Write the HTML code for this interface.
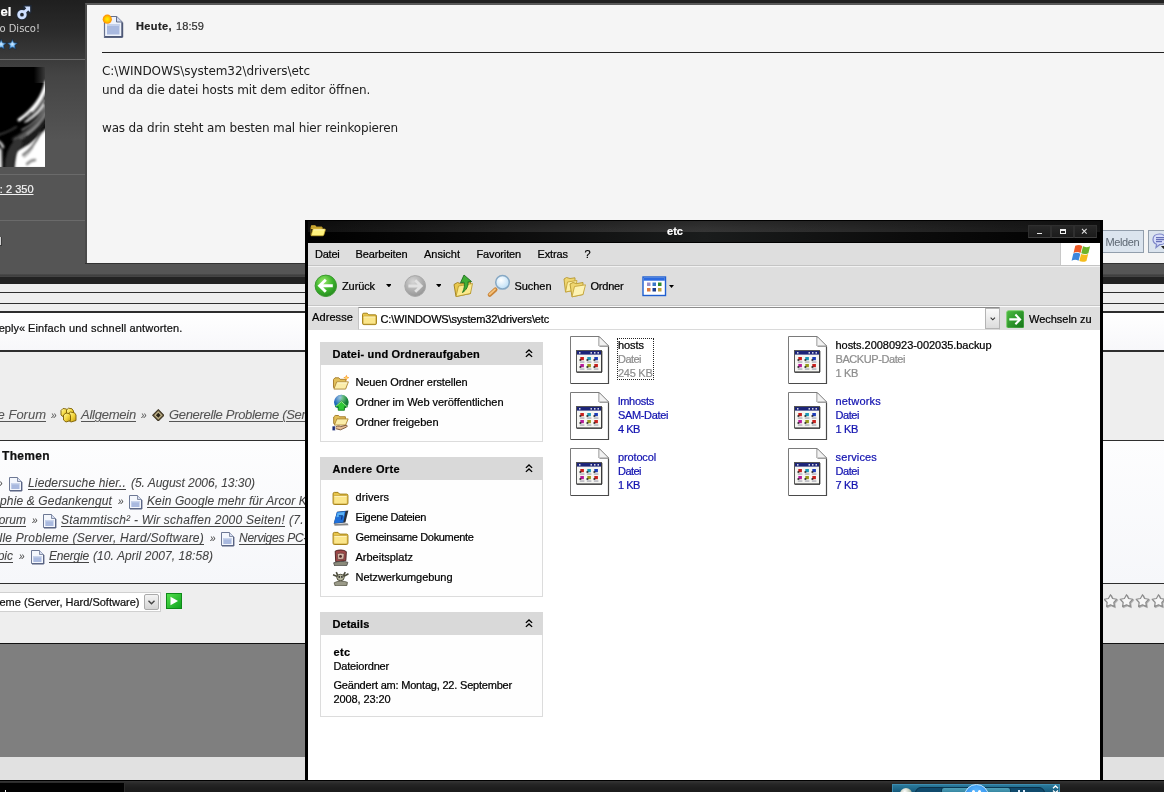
<!DOCTYPE html>
<html lang="de">
<head>
<meta charset="utf-8">
<title>etc</title>
<style>
*{box-sizing:border-box;margin:0;padding:0}
html,body{width:1164px;height:792px;overflow:hidden;background:#7f7f7f;font-family:"Liberation Sans",sans-serif}
#stage{position:relative;width:1164px;height:792px;overflow:hidden;background:#7f7f7f;will-change:transform;transform:translateZ(0)}
#stage div,#stage span,#stage svg{position:absolute;display:block}
.t{white-space:nowrap;-webkit-text-stroke:.22px currentColor}
.hr{background:#2e2e2e}
</style>
</head>
<body>
<div id="stage">

<!-- forum page -->
<div style="left:0;top:0;width:1164px;height:264px;background:#222"></div>
<div id="leftcol" style="left:0;top:0;width:86px;height:264px;background:linear-gradient(#1f1f1f 0,#2a2a2a 30px,#444 75px,#555 140px,#555 264px)"></div>
<div style="left:85px;top:3px;width:1090px;height:261px;background:#f5f5f5;border:2px solid #5a5a5a;border-left-color:#4a4a4a;border-bottom:1px solid #333"></div>
<div style="left:0;top:263px;width:1164px;height:14px;background:linear-gradient(#555 0,#555 11px,#3a3a3a 12px,#444 13px)"></div>
<div style="left:85px;top:263px;width:1080px;height:1px;background:#333"></div>
<div style="left:0;top:277px;width:1164px;height:7px;background:#222"></div>
<div style="left:0;top:284px;width:1164px;height:29px;background:#eee"></div>
<div class="hr" style="left:0;top:292px;width:1164px;height:1px"></div>
<div class="hr" style="left:0;top:303px;width:1164px;height:1px"></div>
<div class="hr" style="left:0;top:311px;width:1164px;height:2px"></div>
<div style="left:0;top:313px;width:1164px;height:38px;background:linear-gradient(#fff,#f7f7fa)"></div>
<div class="hr" style="left:0;top:350px;width:1164px;height:2px"></div>
<div style="left:0;top:352px;width:1164px;height:88px;background:#eee"></div>
<div class="hr" style="left:0;top:440px;width:1164px;height:1px"></div>
<div style="left:0;top:441px;width:1164px;height:143px;background:linear-gradient(#fdfdfe,#f6f7fa)"></div>
<div class="hr" style="left:0;top:583px;width:1164px;height:1px"></div>
<div style="left:0;top:584px;width:1164px;height:59px;background:#eee"></div>
<div class="hr" style="left:0;top:643px;width:1164px;height:1px;background:#111"></div>
<div style="left:0;top:644px;width:1164px;height:113px;background:#7f7f7f"></div>
<div style="left:0;top:757px;width:1164px;height:23px;background:#e1e1e1"></div>
<span class="t" style='left:0.5562500000000004px;top:2.00px;font:normal bold 13px "Liberation Sans",sans-serif;line-height:20px;color:#fff;'>el</span>
<svg style="left:16.200px;top:5.200px" width="15.600" height="15.600" viewBox="0 0 17 17"><g fill="none" stroke="#1d2f4a" stroke-width="5" stroke-linecap="round" opacity=".55"><circle cx="6.5" cy="10.5" r="3.6"/><path d="M9.5 7.5 14 3M10 2.5h4.5V7"/></g><g fill="none" stroke="#cfe0ff" stroke-width="3.100"><circle cx="6.5" cy="10.5" r="3.6"/><path d="M9.3 7.7 14 3"/></g><path d="M9.2 1.6h6.2v6.2z" fill="#cfe0ff"/></svg>
<span class="t" style='left:-0.625px;top:18.50px;font:normal normal 10px "DejaVu Sans","Liberation Sans",sans-serif;line-height:20px;color:#cdcdcd;-webkit-text-stroke:0'>o Disco!</span>
<svg style="left:-6px;top:36px" width="30" height="18" viewBox="-6 36 30 18"><defs><radialGradient id="stg" cx=".5" cy=".5" r=".5"><stop offset="0" stop-color="#d4ecff"/><stop offset=".55" stop-color="#6db8fa"/><stop offset="1" stop-color="#2f8ae6"/></radialGradient></defs><g stroke="#16283e" stroke-opacity=".55" stroke-width="1.400" stroke-linejoin="round" fill="url(#stg)"><path d="M1.20 39.20L2.79 42.52L6.43 43.00L3.77 45.53L4.43 49.15L1.20 47.40L-2.03 49.15L-1.37 45.53L-4.03 43.00L-0.39 42.52z"/><path d="M12.40 39.20L13.99 42.52L17.63 43.00L14.97 45.53L15.63 49.15L12.40 47.40L9.17 49.15L9.83 45.53L7.17 43.00L10.81 42.52z"/></g></svg>
<div style="left:0;top:59px;width:85px;height:1px;background:#6a6a6a"></div>
<svg style="left:0;top:67px" width="45" height="100" viewBox="0 0 45 100">
<defs><linearGradient id="avg" x1="1" y1="0" x2="0" y2="0"><stop offset="0" stop-color="#3a3a3a"/><stop offset=".25" stop-color="#000"/></linearGradient>
<filter id="avb" x="-20%" y="-20%" width="140%" height="140%"><feGaussianBlur stdDeviation=".8"/></filter>
<filter id="avc" x="-20%" y="-20%" width="140%" height="140%"><feGaussianBlur stdDeviation="1.600"/></filter>
<clipPath id="avp"><rect width="45" height="100"/></clipPath></defs>
<rect width="45" height="100" fill="#000"/><rect width="45" height="16" fill="url(#avg)"/>
<g clip-path="url(#avp)">
<g filter="url(#avc)"><path d="M48 60 30 76 16 84 14 102H48z" fill="#fff"/><path d="M-3 80 1.500 82 2 102H-3z" fill="#fff"/>
<path d="M48 34C40 52 28 64 12 72L18 78C32 70 42 58 48 48z" fill="#5a5a5a"/></g>
<g filter="url(#avb)" fill="none" stroke-linecap="round">
<path d="M47 50C40 62 30 72 17 80" stroke="#1c1c1c" stroke-width="6"/>
<path d="M18 76C12 82 9 90 9 102" stroke="#303030" stroke-width="9"/>
<path d="M46 15C43 30 33 43 19 53" stroke="#fff" stroke-width="3"/>
<path d="M46.500 18C43.500 28 39 36 32 43" stroke="#fff" stroke-width="3.600"/>
<path d="M44 38C40 45 34 50 27 54" stroke="#e8e8e8" stroke-width="2.200"/>
<path d="M45 33C41 42 34 49 25 55" stroke="#c8c8c8" stroke-width="1.700"/>
<path d="M46 40C41 50 33 57 22 63" stroke="#8a8a8a" stroke-width="1.500"/>
<path d="M46 28C42 37 36 44 28 50" stroke="#2a2a2a" stroke-width="1.600"/>
<path d="M46 46C42 54 36 61 27 67" stroke="#b0b0b0" stroke-width="1.200"/>
<path d="M16 60C10 64 5 66 -2 68" stroke="#3c3c3c" stroke-width="2"/>
<path d="M-2 74c2 1 4 3 5 6" stroke="#cfcfcf" stroke-width="2.500"/>
<path d="M27 97c3-3 5-4 8-4" stroke="#8a8a8a" stroke-width="2.500"/>
<path d="M40 66C36 76 30 83 23 88" stroke="#555" stroke-width="1.800"/>
<path d="M33 80C30 85 27 88 24 90" stroke="#999" stroke-width="1.400"/>
</g></g></svg>
<div style="left:0;top:174px;width:85px;height:1px;background:#6a6a6a"></div>
<span class="t" style='left:-0.140625px;top:179.00px;font:normal normal 11px "Liberation Sans",sans-serif;line-height:20px;color:#f2f2f2;text-decoration:underline;'>: 2 350</span>
<div style="left:0;top:220px;width:85px;height:1px;background:#6a6a6a"></div>
<div style="left:-3px;top:237px;width:5px;height:9px;background:#d2d2d2;border-right:1px solid #3a3a3a;border-bottom:1px solid #3a3a3a"></div>
<svg style="left:101px;top:13px" width="24" height="27" viewBox="0 0 24 27">
<defs><radialGradient id="sun"><stop offset="0" stop-color="#fff200"/><stop offset=".45" stop-color="#ffd000"/><stop offset="1" stop-color="#ff8a00"/></radialGradient></defs>
<path d="M3.5 3.5h12l5.5 5.5v15.5h-17.5z" fill="#eef2fb" stroke="#66708c" stroke-width="1.2"/>
<path d="M4 23.8h17.2M21.4 9.5v14.8" stroke="#4e5876" stroke-width="1.6" fill="none"/>
<path d="M15.5 3.5v5.5h5.5" fill="#cfd8ee" stroke="#66708c" stroke-width="1"/>
<rect x="6" y="11" width="12.5" height="10.5" fill="#a9b9df"/><rect x="6" y="11" width="12.5" height="2" fill="#c4d0ea"/>
<circle cx="6.3" cy="6.2" r="4.6" fill="url(#sun)"/></svg>
<span class="t" style='left:136px;top:16.00px;font:normal bold 11px "Liberation Sans",sans-serif;line-height:20px;color:#222;letter-spacing:0.396px;'>Heute,</span>
<span class="t" style='left:176px;top:16.00px;font:normal normal 11px "Liberation Sans",sans-serif;line-height:20px;color:#333;letter-spacing:0.094px;'>18:59</span>
<div style="left:102px;top:52px;width:1062px;height:1px;background:#222"></div>
<span class="t" style='left:102px;top:61.00px;font:normal normal 12px "DejaVu Sans","Liberation Sans",sans-serif;line-height:20px;color:#202020;letter-spacing:-0.066px;-webkit-text-stroke:0'>C:\WINDOWS\system32\drivers\etc</span>
<span class="t" style='left:102px;top:80.00px;font:normal normal 12px "DejaVu Sans","Liberation Sans",sans-serif;line-height:20px;color:#202020;letter-spacing:-0.110px;-webkit-text-stroke:0'>und da die datei hosts mit dem editor öffnen.</span>
<span class="t" style='left:102px;top:118.00px;font:normal normal 12px "DejaVu Sans","Liberation Sans",sans-serif;line-height:20px;color:#202020;letter-spacing:-0.153px;-webkit-text-stroke:0'>was da drin steht am besten mal hier reinkopieren</span>
<span class="t" style='left:-1.296875px;top:318.00px;font:normal normal 11px "Liberation Sans",sans-serif;line-height:20px;color:#111;'>eply«</span>
<span class="t" style='left:28px;top:318.00px;font:normal normal 11px "Liberation Sans",sans-serif;line-height:20px;color:#111;letter-spacing:0.156px;'>Einfach und schnell antworten.</span>
<span class="t" style='left:-2.40625px;top:405.00px;font:italic normal 13px "Liberation Sans",sans-serif;line-height:20px;color:#555;text-decoration:underline;-webkit-text-stroke:.08px currentColor;text-underline-offset:2px;text-decoration-thickness:1px;'>e Forum</span>
<span class="t" style='left:51px;top:405.50px;font:italic normal 10px "Liberation Sans",sans-serif;line-height:20px;color:#555;letter-spacing:-0.562px;-webkit-text-stroke:.08px currentColor;text-underline-offset:2px;text-decoration-thickness:1px;'>»</span>
<svg style="left:60px;top:407px" width="17" height="16" viewBox="0 0 17 16"><defs><linearGradient id="fy" x1="0" y1="0" x2="1" y2="1"><stop offset="0" stop-color="#fffbb0"/><stop offset=".5" stop-color="#f4d840"/><stop offset="1" stop-color="#c49a10"/></linearGradient></defs>
<g stroke="#7a5c00" stroke-width=".9" stroke-linejoin="round" fill="url(#fy)">
<path d="M1 3.500 3 1.500 6.500 2 8 4 8 9 3.500 10 1 8z"/>
<path d="M6.500 3 8.500 1.200 12 1.800 13.500 4 13.500 9 9 10 6.500 8z"/>
<path d="M8 7 10.500 5 14.500 5.800 16 8 16 13.500 11 15 8 13z"/>
<path d="M3.500 8 6 6 9.500 6.600 10.500 8.500 10.500 13.500 6 15 3.500 13z"/></g></svg>
<span class="t" style='left:81px;top:405.00px;font:italic normal 13px "Liberation Sans",sans-serif;line-height:20px;color:#555;letter-spacing:-0.233px;text-decoration:underline;-webkit-text-stroke:.08px currentColor;text-underline-offset:2px;text-decoration-thickness:1px;'>Allgemein</span>
<span class="t" style='left:141px;top:405.50px;font:italic normal 10px "Liberation Sans",sans-serif;line-height:20px;color:#555;letter-spacing:-0.562px;-webkit-text-stroke:.08px currentColor;text-underline-offset:2px;text-decoration-thickness:1px;'>»</span>
<svg style="left:151.700px;top:408.500px" width="12.600" height="12.600" viewBox="0 0 15 15"><path d="M7.5 .8 14.2 7.5 7.5 14.2 .8 7.5z" fill="#7a6a48" stroke="#3c3424" stroke-width="1.200"/><path d="M7.5 2.800 12.200 7.500 7.500 12.200 2.800 7.500z" fill="#c4b890"/><path d="M7.500 4.600 10.400 7.500 7.500 10.400 4.600 7.500z" fill="#2d2618"/></svg>
<span class="t" style='left:169px;top:405.00px;font:italic normal 13px "Liberation Sans",sans-serif;line-height:20px;color:#555;letter-spacing:-0.317px;text-decoration:underline;-webkit-text-stroke:.08px currentColor;text-underline-offset:2px;text-decoration-thickness:1px;'>Generelle Probleme (Ser</span>
<span class="t" style='left:2px;top:446.00px;font:normal bold 12px "Liberation Sans",sans-serif;line-height:20px;color:#111;letter-spacing:0.331px;'>Themen</span>
<span class="t" style='left:-3px;top:473.50px;font:italic normal 10px "Liberation Sans",sans-serif;line-height:20px;color:#444;letter-spacing:-0.562px;-webkit-text-stroke:.08px currentColor;text-underline-offset:2px;text-decoration-thickness:1px;'>»</span>
<svg style="left:8px;top:475.5px" width="15" height="16" viewBox="0 0 15 16"><path d="M1.5 1.5h8l4 4v9h-12z" fill="#f4f7fd" stroke="#6d7894" stroke-width="1"/><path d="M2 14.8h11.8M13.8 6v9" stroke="#566080" stroke-width="1.2" fill="none"/><path d="M9.5 1.5v4h4" fill="#d5dcef" stroke="#6d7894" stroke-width=".8"/><rect x="3.3" y="7" width="8.2" height="6" fill="#a9b9df"/><rect x="3.3" y="7" width="8.2" height="1.4" fill="#c9d4ec"/></svg>
<span class="t" style='left:28px;top:473.00px;font:italic normal 12px "Liberation Sans",sans-serif;line-height:20px;color:#444;letter-spacing:0.169px;text-decoration:underline;-webkit-text-stroke:.08px currentColor;text-underline-offset:2px;text-decoration-thickness:1px;'>Liedersuche hier..</span>
<span class="t" style='left:131px;top:473.00px;font:italic normal 12px "Liberation Sans",sans-serif;line-height:20px;color:#444;letter-spacing:-0.043px;-webkit-text-stroke:.08px currentColor;text-underline-offset:2px;text-decoration-thickness:1px;'>(5. August 2006, 13:30)</span>
<span class="t" style='left:0px;top:491.00px;font:italic normal 12px "Liberation Sans",sans-serif;line-height:20px;color:#444;letter-spacing:0.143px;text-decoration:underline;-webkit-text-stroke:.08px currentColor;text-underline-offset:2px;text-decoration-thickness:1px;'>phie &amp; Gedankengut</span>
<span class="t" style='left:118px;top:491.50px;font:italic normal 10px "Liberation Sans",sans-serif;line-height:20px;color:#444;letter-spacing:-0.562px;-webkit-text-stroke:.08px currentColor;text-underline-offset:2px;text-decoration-thickness:1px;'>»</span>
<svg style="left:128px;top:493.5px" width="15" height="16" viewBox="0 0 15 16"><path d="M1.5 1.5h8l4 4v9h-12z" fill="#f4f7fd" stroke="#6d7894" stroke-width="1"/><path d="M2 14.8h11.8M13.8 6v9" stroke="#566080" stroke-width="1.2" fill="none"/><path d="M9.5 1.5v4h4" fill="#d5dcef" stroke="#6d7894" stroke-width=".8"/><rect x="3.3" y="7" width="8.2" height="6" fill="#a9b9df"/><rect x="3.3" y="7" width="8.2" height="1.4" fill="#c9d4ec"/></svg>
<span class="t" style='left:147px;top:491.00px;font:italic normal 12px "Liberation Sans",sans-serif;line-height:20px;color:#444;letter-spacing:0.108px;text-decoration:underline;-webkit-text-stroke:.08px currentColor;text-underline-offset:2px;text-decoration-thickness:1px;'>Kein Google mehr für Arcor K</span>
<span class="t" style='left:-1.34375px;top:510.00px;font:italic normal 12px "Liberation Sans",sans-serif;line-height:20px;color:#444;text-decoration:underline;-webkit-text-stroke:.08px currentColor;text-underline-offset:2px;text-decoration-thickness:1px;'>orum</span>
<span class="t" style='left:32px;top:510.50px;font:italic normal 10px "Liberation Sans",sans-serif;line-height:20px;color:#444;letter-spacing:-0.562px;-webkit-text-stroke:.08px currentColor;text-underline-offset:2px;text-decoration-thickness:1px;'>»</span>
<svg style="left:42px;top:512.5px" width="15" height="16" viewBox="0 0 15 16"><path d="M1.5 1.5h8l4 4v9h-12z" fill="#f4f7fd" stroke="#6d7894" stroke-width="1"/><path d="M2 14.8h11.8M13.8 6v9" stroke="#566080" stroke-width="1.2" fill="none"/><path d="M9.5 1.5v4h4" fill="#d5dcef" stroke="#6d7894" stroke-width=".8"/><rect x="3.3" y="7" width="8.2" height="6" fill="#a9b9df"/><rect x="3.3" y="7" width="8.2" height="1.4" fill="#c9d4ec"/></svg>
<span class="t" style='left:61px;top:510.00px;font:italic normal 12px "Liberation Sans",sans-serif;line-height:20px;color:#444;letter-spacing:0.240px;text-decoration:underline;-webkit-text-stroke:.08px currentColor;text-underline-offset:2px;text-decoration-thickness:1px;'>Stammtisch² - Wir schaffen 2000 Seiten!</span>
<span class="t" style='left:289px;top:510.00px;font:italic normal 12px "Liberation Sans",sans-serif;line-height:20px;color:#444;letter-spacing:0.328px;-webkit-text-stroke:.08px currentColor;text-underline-offset:2px;text-decoration-thickness:1px;'>(7.</span>
<span class="t" style='left:-0.5px;top:528.00px;font:italic normal 12px "Liberation Sans",sans-serif;line-height:20px;color:#444;letter-spacing:0.234px;text-decoration:underline;-webkit-text-stroke:.08px currentColor;text-underline-offset:2px;text-decoration-thickness:1px;'>lle Probleme (Server, Hard/Software)</span>
<span class="t" style='left:210px;top:528.50px;font:italic normal 10px "Liberation Sans",sans-serif;line-height:20px;color:#444;letter-spacing:-0.562px;-webkit-text-stroke:.08px currentColor;text-underline-offset:2px;text-decoration-thickness:1px;'>»</span>
<svg style="left:220px;top:530.5px" width="15" height="16" viewBox="0 0 15 16"><path d="M1.5 1.5h8l4 4v9h-12z" fill="#f4f7fd" stroke="#6d7894" stroke-width="1"/><path d="M2 14.8h11.8M13.8 6v9" stroke="#566080" stroke-width="1.2" fill="none"/><path d="M9.5 1.5v4h4" fill="#d5dcef" stroke="#6d7894" stroke-width=".8"/><rect x="3.3" y="7" width="8.2" height="6" fill="#a9b9df"/><rect x="3.3" y="7" width="8.2" height="1.4" fill="#c9d4ec"/></svg>
<span class="t" style='left:239px;top:528.00px;font:italic normal 12px "Liberation Sans",sans-serif;line-height:20px;color:#444;letter-spacing:-0.280px;text-decoration:underline;-webkit-text-stroke:.08px currentColor;text-underline-offset:2px;text-decoration-thickness:1px;'>Nerviges PC-</span>
<span class="t" style='left:-2.34375px;top:546.00px;font:italic normal 12px "Liberation Sans",sans-serif;line-height:20px;color:#444;text-decoration:underline;-webkit-text-stroke:.08px currentColor;text-underline-offset:2px;text-decoration-thickness:1px;'>pic</span>
<span class="t" style='left:19px;top:546.50px;font:italic normal 10px "Liberation Sans",sans-serif;line-height:20px;color:#444;letter-spacing:-0.562px;-webkit-text-stroke:.08px currentColor;text-underline-offset:2px;text-decoration-thickness:1px;'>»</span>
<svg style="left:30px;top:548.5px" width="15" height="16" viewBox="0 0 15 16"><path d="M1.5 1.5h8l4 4v9h-12z" fill="#f4f7fd" stroke="#6d7894" stroke-width="1"/><path d="M2 14.8h11.8M13.8 6v9" stroke="#566080" stroke-width="1.2" fill="none"/><path d="M9.5 1.5v4h4" fill="#d5dcef" stroke="#6d7894" stroke-width=".8"/><rect x="3.3" y="7" width="8.2" height="6" fill="#a9b9df"/><rect x="3.3" y="7" width="8.2" height="1.4" fill="#c9d4ec"/></svg>
<span class="t" style='left:49px;top:546.00px;font:italic normal 12px "Liberation Sans",sans-serif;line-height:20px;color:#444;letter-spacing:-0.196px;text-decoration:underline;-webkit-text-stroke:.08px currentColor;text-underline-offset:2px;text-decoration-thickness:1px;'>Energie</span>
<span class="t" style='left:93px;top:546.00px;font:italic normal 12px "Liberation Sans",sans-serif;line-height:20px;color:#444;letter-spacing:0.074px;-webkit-text-stroke:.08px currentColor;text-underline-offset:2px;text-decoration-thickness:1px;'>(10. April 2007, 18:58)</span>
<div style="left:-60px;top:592px;width:221px;height:20px;background:#fff;border:1px solid #d0d0d0"></div>
<span class="t" style='left:-0.5px;top:592.00px;font:normal normal 11px "Liberation Sans",sans-serif;line-height:20px;color:#111;'>eme (Server, Hard/Software)</span>
<div style="left:144px;top:594px;width:15px;height:16px;background:linear-gradient(#f4f4f4,#d4d4d4);border:1px solid #aaa;border-radius:2px"></div>
<svg style="left:148px;top:600px" width="7" height="5" viewBox="0 0 7 5"><path d="M.5 .8 3.5 3.8 6.5 .8" fill="none" stroke="#444" stroke-width="1.4"/></svg>
<div style="left:166px;top:593px;width:16px;height:16px;background:linear-gradient(135deg,#52e04a,#11a320);border:1px solid #0e8a18"></div>
<svg style="left:169px;top:596px" width="10" height="10" viewBox="0 0 10 10"><path d="M1.5 .8 9 5 1.5 9.2z" fill="#fff"/></svg>
<div style="left:1101px;top:230px;width:43px;height:23px;background:#dbe4ee;border:1px solid #929eac"></div>
<span class="t" style='left:1105.5px;top:232.00px;font:normal normal 11px "Liberation Sans",sans-serif;line-height:20px;color:#5c6672;letter-spacing:-0.380px;-webkit-text-stroke:0'>Melden</span>
<div style="left:1148px;top:230px;width:24px;height:23px;background:#dbe4ee;border:1px solid #929eac"></div>
<svg style="left:1152px;top:233px" width="14" height="17" viewBox="0 0 14 17"><path d="M7.5 1C3.6 1 1 3.4 1 6.4c0 2.2 1.4 4 3.6 4.9L4 14.5l3.6-2.8c3.8 0 6.4-2.3 6.4-5.3S11.400 1 7.500 1z" fill="#d8defa" stroke="#7d86c8" stroke-width="1.2"/><path d="M4 4.700h8M4 6.700h8M4 8.700h6" stroke="#4b55a8" stroke-width="1"/><path d="M9 13h5l-2.500 3z" fill="#222"/></svg>
<svg style="left:1104px;top:594px" width="64" height="16" viewBox="0 0 64 16"><g fill="#9a9a9a" stroke="#9a9a9a" stroke-width="1.200" stroke-linejoin="round" transform="translate(.9,.9)" opacity=".7"><path d="M6.50 0.70L8.56 4.47L12.78 5.26L9.83 8.38L10.38 12.64L6.50 10.80L2.62 12.64L3.17 8.38L0.22 5.26L4.44 4.47z"/><path d="M22.50 0.70L24.56 4.47L28.78 5.26L25.83 8.38L26.38 12.64L22.50 10.80L18.62 12.64L19.17 8.38L16.22 5.26L20.44 4.47z"/><path d="M38.50 0.70L40.56 4.47L44.78 5.26L41.83 8.38L42.38 12.64L38.50 10.80L34.62 12.64L35.17 8.38L32.22 5.26L36.44 4.47z"/><path d="M54.50 0.70L56.56 4.47L60.78 5.26L57.83 8.38L58.38 12.64L54.50 10.80L50.62 12.64L51.17 8.38L48.22 5.26L52.44 4.47z"/></g><g fill="#f6f6f6" stroke="#8c8c8c" stroke-width="1.200" stroke-linejoin="round"><path d="M6.50 0.70L8.56 4.47L12.78 5.26L9.83 8.38L10.38 12.64L6.50 10.80L2.62 12.64L3.17 8.38L0.22 5.26L4.44 4.47z"/><path d="M22.50 0.70L24.56 4.47L28.78 5.26L25.83 8.38L26.38 12.64L22.50 10.80L18.62 12.64L19.17 8.38L16.22 5.26L20.44 4.47z"/><path d="M38.50 0.70L40.56 4.47L44.78 5.26L41.83 8.38L42.38 12.64L38.50 10.80L34.62 12.64L35.17 8.38L32.22 5.26L36.44 4.47z"/><path d="M54.50 0.70L56.56 4.47L60.78 5.26L57.83 8.38L58.38 12.64L54.50 10.80L50.62 12.64L51.17 8.38L48.22 5.26L52.44 4.47z"/></g></svg>
<!-- explorer window -->
<div id="win" style="left:305px;top:220px;width:798px;height:575px;background:#fff;border:3px solid #000;border-top:0"></div>
<div style="left:305px;top:220px;width:798px;height:23px;background:#000"></div>
<div style="left:308px;top:221px;width:792px;height:11px;background:linear-gradient(90deg,#101010 0,#262626 25%,#363636 50%,#262626 75%,#141414 100%)"></div>
<div style="left:308px;top:221px;width:792px;height:11px;background:linear-gradient(rgba(0,0,0,.25),rgba(0,0,0,0))"></div>
<div style="left:308px;top:232px;width:792px;height:10px;background:linear-gradient(90deg,#000 0,#0c0c0c 25%,#1a1c1c 50%,#0c0c0c 75%,#000 100%)"></div>
<svg style="left:309.500px;top:223.500px" width="16" height="13.400" viewBox="0 0 18 15"><path d="M1 2.800c0-.8.500-1.300 1.300-1.300h3.600l1.400 1.500h5.400c.8 0 1.300.5 1.300 1.300v1.200H1z" fill="#d9b43a"/><path d="M1 12.500V3.500h12.500v2" fill="none" stroke="#a8881e" stroke-width=".8"/><path d="M3.400 5.600h13.200c.5 0 .8.400.7.900l-1.700 5.700c-.200.600-.7 1-1.400 1H1.200z" fill="#fff27c" stroke="#c9a92a" stroke-width=".8"/><path d="M4 6.500h12" stroke="#fffbd0" stroke-width=".9"/></svg>
<span class="t" style='left:667px;top:221.00px;font:normal bold 11px "Liberation Sans",sans-serif;line-height:20px;color:#fff;letter-spacing:0.031px;'>etc</span>
<div style="left:1028px;top:225px;width:23px;height:13px;background:linear-gradient(#282828,#1b1b1b);border:1px solid #2f2f2f;border-bottom-color:#404040"></div>
<div style="left:1051px;top:225px;width:23px;height:13px;background:linear-gradient(#282828,#1b1b1b);border:1px solid #2f2f2f;border-bottom-color:#404040"></div>
<div style="left:1074px;top:225px;width:23px;height:13px;background:linear-gradient(#282828,#1b1b1b);border:1px solid #2f2f2f;border-bottom-color:#404040"></div>
<div style="left:1037px;top:232.500px;width:5px;height:1.600px;background:#e8e8e8"></div>
<div style="left:1060px;top:228.800px;width:5.500px;height:5.400px;border:1px solid #f0f0f0;border-top-width:2px"></div>
<svg style="left:1081px;top:228.200px" width="6.600" height="6.600" viewBox="0 0 7 7"><path d="M1 1 6 6M6 1 1 6" stroke="#e4e4e4" stroke-width="1.100"/></svg>
<div style="left:308px;top:243px;width:792px;height:23px;background:#dedede;border-bottom:1px solid #c4c4c4"></div>
<span class="t" style='left:315px;top:244.00px;font:normal normal 11px "Liberation Sans",sans-serif;line-height:20px;color:#000;letter-spacing:-0.237px;'>Datei</span>
<span class="t" style='left:355.5px;top:244.00px;font:normal normal 11px "Liberation Sans",sans-serif;line-height:20px;color:#000;letter-spacing:-0.122px;'>Bearbeiten</span>
<span class="t" style='left:424px;top:244.00px;font:normal normal 11px "Liberation Sans",sans-serif;line-height:20px;color:#000;letter-spacing:-0.011px;'>Ansicht</span>
<span class="t" style='left:476.5px;top:244.00px;font:normal normal 11px "Liberation Sans",sans-serif;line-height:20px;color:#000;letter-spacing:-0.151px;'>Favoriten</span>
<span class="t" style='left:537.5px;top:244.00px;font:normal normal 11px "Liberation Sans",sans-serif;line-height:20px;color:#000;letter-spacing:-0.115px;'>Extras</span>
<span class="t" style='left:584.5px;top:244.00px;font:normal normal 11px "Liberation Sans",sans-serif;line-height:20px;color:#000;letter-spacing:-0.625px;'>?</span>
<div style="left:1060px;top:243px;width:40px;height:22px;background:#fff;border-left:1px solid #c8c8c8"></div>
<svg style="left:1071px;top:242.600px" width="24" height="21.500" viewBox="0 0 22 20"><defs><filter id="fb"><feGaussianBlur stdDeviation=".45"/></filter></defs><g filter="url(#fb)">
<path d="M3.800 2.600c2.200-1.100 4.400-1.100 6.500.1L8.700 9.200c-2.100-1.100-4.300-1.100-6.500 0z" fill="#ee5a28"/>
<path d="M11 3.100c2 1 4.300 1 6.600-.1L16 9.500c-2.300 1.100-4.600 1.100-6.600.1z" fill="#6cb42c"/>
<path d="M2 9.800c2.200-1.100 4.400-1.100 6.500.1L6.900 16.400c-2.100-1.100-4.300-1.100-6.500 0z" fill="#3c86dc"/>
<path d="M9.200 10.300c2 1 4.300 1 6.600-.1L14.200 16.700c-2.300 1.100-4.600 1.100-6.600.1z" fill="#f4bc1c"/></g></svg>
<div style="left:308px;top:266px;width:792px;height:40px;background:#dedede;border-top:1px solid #f2f2f2;border-bottom:1px solid #c6c6c6"></div>
<svg style="left:313px;top:274px" width="26" height="25" viewBox="0 0 26 25"><defs><radialGradient id="gb" cx=".4" cy=".3" r=".8"><stop offset="0" stop-color="#9ae86a"/><stop offset=".5" stop-color="#3fb62e"/><stop offset="1" stop-color="#1f7f1c"/></radialGradient></defs>
<circle cx="12.800" cy="11.800" r="10.700" fill="url(#gb)" stroke="#3c9a30" stroke-width="1"/><path d="M12.800 5.800 6.600 11.800 12.800 17.800M7.500 11.800H19.800" fill="none" stroke="#fff" stroke-width="2.900" stroke-linejoin="miter"/></svg>
<span class="t" style='left:342px;top:276.00px;font:normal normal 11px "Liberation Sans",sans-serif;line-height:20px;color:#000;letter-spacing:-0.104px;'>Zurück</span>
<svg style="left:385.500px;top:284px" width="5.800" height="3.400" viewBox="0 0 7 4"><path d="M0 0h7L3.500 4z" fill="#000"/></svg>
<svg style="left:402px;top:274px" width="26" height="25" viewBox="0 0 26 25"><defs><radialGradient id="gf" cx=".4" cy=".3" r=".8"><stop offset="0" stop-color="#d6d6d6"/><stop offset=".6" stop-color="#aaa"/><stop offset="1" stop-color="#8e8e8e"/></radialGradient></defs>
<circle cx="13.200" cy="12" r="10.400" fill="url(#gf)" stroke="#a8a8a8" stroke-width="1"/><path d="M13.200 6.200 19.200 12 13.200 17.800M18.400 12H6.400" fill="none" stroke="#e2e2e2" stroke-width="2.800" stroke-linejoin="miter"/></svg>
<svg style="left:435.500px;top:284px" width="5.800" height="3.400" viewBox="0 0 7 4"><path d="M0 0h7L3.500 4z" fill="#000"/></svg>
<svg style="left:452px;top:273px" width="23" height="26" viewBox="0 0 23 26">
<path d="M2 11.500 5.500 9.500 9 10.800 18.500 9v11.500L4 23.500z" fill="#e9c84e" stroke="#9c7d1a" stroke-width=".9" stroke-linejoin="round"/>
<path d="M4 23.500 6.500 13 20.500 10.500 18.500 20.500z" fill="#fbe98c" stroke="#b4942a" stroke-width=".8" stroke-linejoin="round"/>
<path d="M12 2 19.500 8.500 16 8.800C16.500 13 14.500 17 10.500 19.500 12.500 15.500 12.800 12 12 9.200L8.500 9.800z" fill="#3fae34" stroke="#1d6e1c" stroke-width=".9" stroke-linejoin="round"/></svg>
<svg style="left:485px;top:273px" width="27" height="26" viewBox="0 0 27 26"><defs><radialGradient id="gl" cx=".4" cy=".35" r=".7"><stop offset="0" stop-color="#fff"/><stop offset="1" stop-color="#b8dcf6"/></radialGradient></defs>
<path d="M4.800 21.800 10.400 16.600" stroke="#c98438" stroke-width="4.200" stroke-linecap="round"/><path d="M4.600 21.300 10 16.300" stroke="#f6c47c" stroke-width="1.800" stroke-linecap="round"/>
<circle cx="17.500" cy="9.300" r="6.800" fill="url(#gl)" stroke="#86a8c4" stroke-width="1.500"/></svg>
<span class="t" style='left:514.5px;top:276.00px;font:normal normal 11px "Liberation Sans",sans-serif;line-height:20px;color:#000;letter-spacing:-0.052px;'>Suchen</span>
<svg style="left:562px;top:275px" width="25" height="23" viewBox="0 0 25 23"><g stroke-linejoin="round" stroke-width=".9">
<path d="M2 4 4.500 2.500 8 3.500 13 2.800V15L3.500 17z" fill="#efd670" stroke="#b4962e"/>
<path d="M3.500 17 5.500 7 15 5.500 13 15z" fill="#fcefa4" stroke="#c4a43a"/>
<path d="M8 9 11 7.500 14.500 8.600 21 7.500V19.500L10 21.800z" fill="#efd670" stroke="#b4962e"/>
<path d="M10 21.800 12.500 11.500 23.500 9.800 21 19.500z" fill="#fdf3b4" stroke="#c4a43a"/></g></svg>
<span class="t" style='left:590.5px;top:276.00px;font:normal normal 11px "Liberation Sans",sans-serif;line-height:20px;color:#000;letter-spacing:-0.208px;'>Ordner</span>
<svg style="left:642px;top:276px" width="25" height="21" viewBox="0 0 25 21"><rect x="1" y="1" width="22.500" height="18.500" fill="#fff" stroke="#1f5fd0" stroke-width="1.400"/><rect x="1.700" y="1.700" width="21.100" height="3" fill="#2c6ae0"/><rect x="5.0" y="6.5" width="3.500" height="3.500" fill="#9a8ec8"/><rect x="10.5" y="6.5" width="3.500" height="3.500" fill="#3a78c8"/><rect x="16.0" y="6.5" width="3.500" height="3.500" fill="#2e8a2e"/><rect x="5.0" y="12.0" width="3.500" height="3.500" fill="#e07a3a"/><rect x="10.5" y="12.0" width="3.500" height="3.500" fill="#1c3c8c"/><rect x="16.0" y="12.0" width="3.500" height="3.500" fill="#c4a43c"/></svg>
<svg style="left:669.300px;top:284.600px" width="5" height="3.300" viewBox="0 0 6 4"><path d="M0 0h6L3 3.500z" fill="#000"/></svg>
<div style="left:308px;top:306px;width:792px;height:24px;background:#dedede;border-top:1px solid #fafafa"></div>
<span class="t" style='left:312px;top:307.00px;font:normal normal 11px "Liberation Sans",sans-serif;line-height:20px;color:#000;letter-spacing:0.092px;'>Adresse</span>
<div style="left:358px;top:307px;width:642px;height:23px;background:#fff;border:1px solid #c4c4c4;border-top-color:#8c8c8c;border-bottom-color:#dadada"></div>
<svg style="left:361px;top:311px" width="17" height="15" viewBox="0 0 16 15"><path d="M1 3.5c0-.8.5-1.300 1.300-1.300h3.400l1.500 1.600h6.500c.8 0 1.300.5 1.300 1.300v7.200c0 .8-.5 1.300-1.300 1.300H2.300c-.8 0-1.300-.5-1.300-1.300z" fill="#e8c54a" stroke="#9c7a12" stroke-width=".9"/><path d="M1.600 6.200c0-.6.400-1 1-1h10.800c.6 0 1 .4 1 1v5.900c0 .6-.4 1-1 1H2.600c-.6 0-1-.4-1-1z" fill="#fbe68a" stroke="#b8922a" stroke-width=".6"/><path d="M2.200 6h11.600" stroke="#fff6c8" stroke-width=".8"/></svg>
<span class="t" style='left:380.5px;top:309.00px;font:normal normal 11px "Liberation Sans",sans-serif;line-height:20px;color:#000;letter-spacing:-0.164px;'>C:\WINDOWS\system32\drivers\etc</span>
<div style="left:985px;top:308px;width:15px;height:21px;background:linear-gradient(#fafafa,#dcdcdc);border:1px solid #b4b4b4"></div>
<svg style="left:990px;top:316.500px" width="5.600" height="4" viewBox="0 0 7 5"><path d="M.800 .800 3.500 3.500 6.200 .800" fill="none" stroke="#333" stroke-width="1.400"/></svg>
<svg style="left:1005.600px;top:309.700px" width="18.800" height="18.800" viewBox="0 0 20 20"><defs><linearGradient id="gg" x1="0" y1="0" x2="1" y2="1"><stop offset="0" stop-color="#4cbc40"/><stop offset="1" stop-color="#127218"/></linearGradient></defs>
<rect x=".700" y=".700" width="18.600" height="18.600" rx="2" fill="url(#gg)" stroke="#7fd070" stroke-width="1"/><path d="M3.500 10h11M10 4.800 15 10 10 15.200" fill="none" stroke="#fff" stroke-width="2.200" stroke-linejoin="miter"/></svg>
<span class="t" style='left:1029px;top:309.00px;font:normal normal 11px "Liberation Sans",sans-serif;line-height:20px;color:#000;letter-spacing:-0.026px;'>Wechseln zu</span>
<div style="left:320px;top:342px;width:223px;height:100px;background:#fefefe;border:1px solid #dcdcdc"></div>
<div style="left:320px;top:342px;width:223px;height:23px;background:#d9d9d9"></div>
<span class="t" style='left:332.5px;top:344.00px;font:normal bold 11px "Liberation Sans",sans-serif;line-height:20px;color:#000;letter-spacing:0.204px;'>Datei- und Ordneraufgaben</span>
<svg style="left:524.500px;top:349.3px" width="8" height="9" viewBox="0 0 9 10"><path d="M1 4.300 4.500 1 8 4.300M1 8.800 4.500 5.500 8 8.800" fill="none" stroke="#000" stroke-width="1.500"/></svg>
<div style="left:320px;top:457px;width:223px;height:140px;background:#fefefe;border:1px solid #dcdcdc"></div>
<div style="left:320px;top:457px;width:223px;height:23px;background:#d9d9d9"></div>
<span class="t" style='left:332.5px;top:459.00px;font:normal bold 11px "Liberation Sans",sans-serif;line-height:20px;color:#000;letter-spacing:0.357px;'>Andere Orte</span>
<svg style="left:524.500px;top:464.3px" width="8" height="9" viewBox="0 0 9 10"><path d="M1 4.300 4.500 1 8 4.300M1 8.800 4.500 5.500 8 8.800" fill="none" stroke="#000" stroke-width="1.500"/></svg>
<div style="left:320px;top:612px;width:223px;height:105px;background:#fefefe;border:1px solid #dcdcdc"></div>
<div style="left:320px;top:612px;width:223px;height:23px;background:#d9d9d9"></div>
<span class="t" style='left:332.5px;top:614.00px;font:normal bold 11px "Liberation Sans",sans-serif;line-height:20px;color:#000;letter-spacing:0.132px;'>Details</span>
<svg style="left:524.500px;top:619.3px" width="8" height="9" viewBox="0 0 9 10"><path d="M1 4.300 4.500 1 8 4.300M1 8.800 4.500 5.500 8 8.800" fill="none" stroke="#000" stroke-width="1.500"/></svg>
<svg style="left:332px;top:374px" width="17" height="17" viewBox="0 0 16 16"><path d="M1.400 5.200 2.800 3.600H6.400L7.600 5H13V12.800H1.400z" fill="#e2bf58" stroke="#a47c2c" stroke-width=".9" stroke-linejoin="round"/><path d="M1.800 14.200 4.400 7.400H15.400L12.800 14.200z" fill="#fbedaa" stroke="#b08a3a" stroke-width=".9" stroke-linejoin="round"/><path d="M5 8.400h9.400" stroke="#fffbe0" stroke-width=".8"/><path d="M13.500 .6 14.300 2.700 16.400 3.500 14.300 4.300 13.500 6.400 12.700 4.300 10.600 3.500 12.700 2.700z" fill="#ff8a1c"/><circle cx="13.500" cy="3.500" r="1.200" fill="#ffd86a"/></svg>
<span class="t" style='left:355.5px;top:372.00px;font:normal normal 11px "Liberation Sans",sans-serif;line-height:20px;color:#000;letter-spacing:-0.107px;'>Neuen Ordner erstellen</span>
<svg style="left:332px;top:394px" width="17" height="17" viewBox="0 0 16 16"><defs><linearGradient id="glb" x1="0" y1="0" x2="1" y2=".3"><stop offset="0" stop-color="#1c54c4"/><stop offset=".42" stop-color="#1f7ab0"/><stop offset=".6" stop-color="#1c9a44"/><stop offset="1" stop-color="#157a34"/></linearGradient><radialGradient id="glh" cx=".42" cy=".2" r=".5"><stop offset="0" stop-color="#fff" stop-opacity=".55"/><stop offset="1" stop-color="#fff" stop-opacity="0"/></radialGradient></defs><circle cx="8.800" cy="7.600" r="6.900" fill="url(#glb)"/><circle cx="8.800" cy="7.600" r="6.900" fill="url(#glh)"/><path d="M8.800 6.800 14.600 12H11.700V15.300H5.900V12H3z" fill="#2fc834" stroke="#0f7a1c" stroke-width=".8" stroke-linejoin="round"/><path d="M3.600 11.700 8.800 7.100 14 11.700" fill="none" stroke="#b8f4a8" stroke-width=".8"/></svg>
<span class="t" style='left:355.5px;top:392.00px;font:normal normal 11px "Liberation Sans",sans-serif;line-height:20px;color:#000;letter-spacing:-0.027px;'>Ordner im Web veröffentlichen</span>
<svg style="left:332px;top:414px" width="17" height="17" viewBox="0 0 16 16"><path d="M1.600 2.800 3 1.400H6.200L7.200 2.600H12.600V9H1.600z" fill="#e2bf58" stroke="#a47c2c" stroke-width=".9" stroke-linejoin="round"/><path d="M2.200 10.400 4.600 4.600H15.200L12.800 10.400z" fill="#fbedaa" stroke="#b08a3a" stroke-width=".9" stroke-linejoin="round"/><path d="M2.400 13.600c1.600-2.400 4-2.800 5.800-1.700l5-1.300c1.200-.2 1.500 1 .5 1.700L8 14.900z" fill="#e8c098" stroke="#6a4428" stroke-width=".8"/><path d="M.400 11.600h2.700v3.800H.400z" fill="#1c2c7a"/><path d="M3.200 12.200v3" stroke="#fff" stroke-width=".7"/></svg>
<span class="t" style='left:355.5px;top:412.00px;font:normal normal 11px "Liberation Sans",sans-serif;line-height:20px;color:#000;letter-spacing:-0.011px;'>Ordner freigeben</span>
<svg style="left:332px;top:489px" width="17" height="17" viewBox="0 0 16 16"><g transform="translate(0,1)"><path d="M1 3.5c0-.8.5-1.300 1.300-1.300h3.400l1.500 1.600h6.500c.8 0 1.300.5 1.300 1.300v7.200c0 .8-.5 1.300-1.300 1.300H2.300c-.8 0-1.300-.5-1.300-1.300z" fill="#e8c54a" stroke="#9c7a12" stroke-width=".9"/><path d="M1.600 6.200c0-.6.400-1 1-1h10.800c.6 0 1 .4 1 1v5.900c0 .6-.4 1-1 1H2.600c-.6 0-1-.4-1-1z" fill="#fbe68a" stroke="#b8922a" stroke-width=".6"/><path d="M2.200 6h11.600" stroke="#fff6c8" stroke-width=".8"/></g></svg>
<span class="t" style='left:355.5px;top:487.00px;font:normal normal 11px "Liberation Sans",sans-serif;line-height:20px;color:#000;letter-spacing:0.069px;'>drivers</span>
<svg style="left:332px;top:509px" width="17" height="17" viewBox="0 0 16 16"><path d="M2 14.200 14.600 13.300 15.600 15.200 2.400 15.700z" fill="#555" opacity=".7"/><path d="M4.800 2.600 15.400 1.400 12.600 12.800 1.600 13.800z" fill="#2a2e36"/><path d="M4.600 2.800 12.800 1.800 10.600 12.600 1.800 13.500z" fill="#1f6fd8"/><path d="M5.200 3.600 11.800 2.800 11 6.800 4.200 7.800z" fill="#58b0f4"/><path d="M6.400 6.400h3.200l-.8 3.600" fill="none" stroke="#0c3c8c" stroke-width="1.200"/></svg>
<span class="t" style='left:355.5px;top:507.00px;font:normal normal 11px "Liberation Sans",sans-serif;line-height:20px;color:#000;letter-spacing:-0.338px;'>Eigene Dateien</span>
<svg style="left:332px;top:529px" width="17" height="17" viewBox="0 0 16 16"><g transform="translate(0,1)"><path d="M1 3.5c0-.8.5-1.300 1.300-1.300h3.400l1.500 1.600h6.500c.8 0 1.300.5 1.300 1.300v7.200c0 .8-.5 1.300-1.300 1.300H2.300c-.8 0-1.300-.5-1.300-1.300z" fill="#e8c54a" stroke="#9c7a12" stroke-width=".9"/><path d="M1.600 6.200c0-.6.400-1 1-1h10.800c.6 0 1 .4 1 1v5.900c0 .6-.4 1-1 1H2.600c-.6 0-1-.4-1-1z" fill="#fbe68a" stroke="#b8922a" stroke-width=".6"/><path d="M2.200 6h11.600" stroke="#fff6c8" stroke-width=".8"/></g></svg>
<span class="t" style='left:355.5px;top:527.00px;font:normal normal 11px "Liberation Sans",sans-serif;line-height:20px;color:#000;letter-spacing:-0.337px;'>Gemeinsame Dokumente</span>
<svg style="left:332px;top:549px" width="17" height="17" viewBox="0 0 16 16"><path d="M3 2C6 .5 11 .5 13.500 2.500L13 11 3.500 12z" fill="#a04848" stroke="#4c2222" stroke-width=".9"/><path d="M5 4.500c2-.8 4.500-.8 6.500 0L11 9.500 5.500 10z" fill="#d8b8a8" stroke="#5c3a3a" stroke-width=".6"/><path d="M1.500 13c3-1.500 10-1.800 13.500-.5L14 15.500 2.500 16z" fill="#8a8a7a" stroke="#444" stroke-width=".7"/><circle cx="8" cy="7" r="1.300" fill="#4c2a2a"/></svg>
<span class="t" style='left:355.5px;top:547.00px;font:normal normal 11px "Liberation Sans",sans-serif;line-height:20px;color:#000;letter-spacing:0.001px;'>Arbeitsplatz</span>
<svg style="left:332px;top:569px" width="17" height="17" viewBox="0 0 16 16"><path d="M1 5.500 6 7.500 4 3M15.500 4.500 10 7.500 12.500 3" fill="none" stroke="#4a4a3a" stroke-width="1.500"/><ellipse cx="8" cy="8" rx="3.500" ry="3" fill="#b8b8a0" stroke="#4a4a3a" stroke-width=".9"/><path d="M2 13c3-2 9-2 12.500-.5L14 15.500 3 16z" fill="#9a9a88" stroke="#4a4a3a" stroke-width=".7"/><circle cx="6.800" cy="7.500" r=".8" fill="#222"/><circle cx="9.300" cy="7.500" r=".8" fill="#222"/></svg>
<span class="t" style='left:355.5px;top:567.00px;font:normal normal 11px "Liberation Sans",sans-serif;line-height:20px;color:#000;letter-spacing:-0.053px;'>Netzwerkumgebung</span>
<span class="t" style='left:333.5px;top:642.00px;font:normal bold 11px "Liberation Sans",sans-serif;line-height:20px;color:#000;letter-spacing:0.365px;'>etc</span>
<span class="t" style='left:333.5px;top:656.00px;font:normal normal 11px "Liberation Sans",sans-serif;line-height:20px;color:#000;letter-spacing:-0.180px;'>Dateiordner</span>
<span class="t" style='left:333.5px;top:675.00px;font:normal normal 11px "Liberation Sans",sans-serif;line-height:20px;color:#000;letter-spacing:-0.199px;'>Geändert am: Montag, 22. September</span>
<span class="t" style='left:333.5px;top:689.00px;font:normal normal 11px "Liberation Sans",sans-serif;line-height:20px;color:#000;letter-spacing:-0.102px;'>2008, 23:20</span>
<svg style="left:570px;top:336px" width="40" height="49" viewBox="0 0 40 49"><g>
<path d="M.500 .500H29L38.500 10V47.500H.500z" fill="#fff" stroke="#7a7a7a" stroke-width="1"/>
<path d="M38.500 10.500V47.500H1" fill="none" stroke="#4a4a4a" stroke-width="1.200"/>
<path d="M29 .500V10h9.500z" fill="#f0f0f0" stroke="#7a7a7a" stroke-width="1" stroke-linejoin="round"/>
<path d="M29.500 10.500h9l-9-9z" fill="#f2f2f2"/><path d="M30 10.200h8.300" stroke="#9a9a9a" stroke-width="1.400"/>
<rect x="6.500" y="14.500" width="25" height="21.500" fill="#f6f6f2" stroke="#555" stroke-width="1"/>
<path d="M7 36.300h25M31.800 15v21" stroke="#333" stroke-width="1.100" fill="none"/>
<rect x="7" y="15" width="24" height="3.600" fill="#1c2478"/>
<rect x="9" y="16.200" width="1.500" height="1.300" fill="#fff"/><rect x="20.500" y="16.200" width="1.500" height="1.300" fill="#fff"/><rect x="24" y="16.200" width="1.500" height="1.300" fill="#fff"/><rect x="27.500" y="16.200" width="1.500" height="1.300" fill="#fff"/>
<rect x="10.3" y="21" width="3.600" height="3.200" fill="#c8201c"/><rect x="9.5" y="23.2" width="1.800" height="1.600" fill="#222"/><rect x="9.8" y="25.6" width="4.600" height=".9" fill="#8a8a9a"/><rect x="17.3" y="21" width="3.600" height="3.200" fill="#1c9ab8"/><rect x="16.5" y="23.2" width="1.800" height="1.600" fill="#222"/><rect x="16.8" y="25.6" width="4.600" height=".9" fill="#8a8a9a"/><rect x="24.3" y="21" width="3.600" height="3.200" fill="#1c3cb8"/><rect x="23.5" y="23.2" width="1.800" height="1.600" fill="#222"/><rect x="23.8" y="25.6" width="4.600" height=".9" fill="#8a8a9a"/><rect x="10.3" y="28" width="3.600" height="3.200" fill="#b81c9a"/><rect x="9.5" y="30.2" width="1.800" height="1.600" fill="#222"/><rect x="9.8" y="32.6" width="4.600" height=".9" fill="#8a8a9a"/><rect x="17.3" y="28" width="3.600" height="3.200" fill="#9a9a1c"/><rect x="16.5" y="30.2" width="1.800" height="1.600" fill="#222"/><rect x="16.8" y="32.6" width="4.600" height=".9" fill="#8a8a9a"/><rect x="24.3" y="28" width="3.600" height="3.200" fill="#c8201c"/><rect x="23.5" y="30.2" width="1.800" height="1.600" fill="#222"/><rect x="23.8" y="32.6" width="4.600" height=".9" fill="#8a8a9a"/></g></svg>
<span class="t" style='left:618px;top:335.00px;font:normal normal 11px "Liberation Sans",sans-serif;line-height:20px;color:#000;letter-spacing:-0.059px;'>hosts</span>
<span class="t" style='left:618px;top:349.00px;font:normal normal 11px "Liberation Sans",sans-serif;line-height:20px;color:#8e8e8e;letter-spacing:-0.537px;'>Datei</span>
<span class="t" style='left:618px;top:363.00px;font:normal normal 11px "Liberation Sans",sans-serif;line-height:20px;color:#8e8e8e;letter-spacing:-0.266px;'>245 KB</span>
<div style="left:617px;top:338px;width:37px;height:42px;border:1px dotted #222"></div>
<svg style="left:570px;top:392px" width="40" height="49" viewBox="0 0 40 49"><g>
<path d="M.500 .500H29L38.500 10V47.500H.500z" fill="#fff" stroke="#7a7a7a" stroke-width="1"/>
<path d="M38.500 10.500V47.500H1" fill="none" stroke="#4a4a4a" stroke-width="1.200"/>
<path d="M29 .500V10h9.500z" fill="#f0f0f0" stroke="#7a7a7a" stroke-width="1" stroke-linejoin="round"/>
<path d="M29.500 10.500h9l-9-9z" fill="#f2f2f2"/><path d="M30 10.200h8.300" stroke="#9a9a9a" stroke-width="1.400"/>
<rect x="6.500" y="14.500" width="25" height="21.500" fill="#f6f6f2" stroke="#555" stroke-width="1"/>
<path d="M7 36.300h25M31.800 15v21" stroke="#333" stroke-width="1.100" fill="none"/>
<rect x="7" y="15" width="24" height="3.600" fill="#1c2478"/>
<rect x="9" y="16.200" width="1.500" height="1.300" fill="#fff"/><rect x="20.500" y="16.200" width="1.500" height="1.300" fill="#fff"/><rect x="24" y="16.200" width="1.500" height="1.300" fill="#fff"/><rect x="27.500" y="16.200" width="1.500" height="1.300" fill="#fff"/>
<rect x="10.3" y="21" width="3.600" height="3.200" fill="#c8201c"/><rect x="9.5" y="23.2" width="1.800" height="1.600" fill="#222"/><rect x="9.8" y="25.6" width="4.600" height=".9" fill="#8a8a9a"/><rect x="17.3" y="21" width="3.600" height="3.200" fill="#1c9ab8"/><rect x="16.5" y="23.2" width="1.800" height="1.600" fill="#222"/><rect x="16.8" y="25.6" width="4.600" height=".9" fill="#8a8a9a"/><rect x="24.3" y="21" width="3.600" height="3.200" fill="#1c3cb8"/><rect x="23.5" y="23.2" width="1.800" height="1.600" fill="#222"/><rect x="23.8" y="25.6" width="4.600" height=".9" fill="#8a8a9a"/><rect x="10.3" y="28" width="3.600" height="3.200" fill="#b81c9a"/><rect x="9.5" y="30.2" width="1.800" height="1.600" fill="#222"/><rect x="9.8" y="32.6" width="4.600" height=".9" fill="#8a8a9a"/><rect x="17.3" y="28" width="3.600" height="3.200" fill="#9a9a1c"/><rect x="16.5" y="30.2" width="1.800" height="1.600" fill="#222"/><rect x="16.8" y="32.6" width="4.600" height=".9" fill="#8a8a9a"/><rect x="24.3" y="28" width="3.600" height="3.200" fill="#c8201c"/><rect x="23.5" y="30.2" width="1.800" height="1.600" fill="#222"/><rect x="23.8" y="32.6" width="4.600" height=".9" fill="#8a8a9a"/></g></svg>
<span class="t" style='left:618px;top:391.00px;font:normal normal 11px "Liberation Sans",sans-serif;line-height:20px;color:#1212b0;letter-spacing:-0.272px;'>lmhosts</span>
<span class="t" style='left:618px;top:405.00px;font:normal normal 11px "Liberation Sans",sans-serif;line-height:20px;color:#1212b0;letter-spacing:-0.354px;'>SAM-Datei</span>
<span class="t" style='left:618px;top:419.00px;font:normal normal 11px "Liberation Sans",sans-serif;line-height:20px;color:#1212b0;letter-spacing:-0.465px;'>4 KB</span>
<svg style="left:570px;top:448px" width="40" height="49" viewBox="0 0 40 49"><g>
<path d="M.500 .500H29L38.500 10V47.500H.500z" fill="#fff" stroke="#7a7a7a" stroke-width="1"/>
<path d="M38.500 10.500V47.500H1" fill="none" stroke="#4a4a4a" stroke-width="1.200"/>
<path d="M29 .500V10h9.500z" fill="#f0f0f0" stroke="#7a7a7a" stroke-width="1" stroke-linejoin="round"/>
<path d="M29.500 10.500h9l-9-9z" fill="#f2f2f2"/><path d="M30 10.200h8.300" stroke="#9a9a9a" stroke-width="1.400"/>
<rect x="6.500" y="14.500" width="25" height="21.500" fill="#f6f6f2" stroke="#555" stroke-width="1"/>
<path d="M7 36.300h25M31.800 15v21" stroke="#333" stroke-width="1.100" fill="none"/>
<rect x="7" y="15" width="24" height="3.600" fill="#1c2478"/>
<rect x="9" y="16.200" width="1.500" height="1.300" fill="#fff"/><rect x="20.500" y="16.200" width="1.500" height="1.300" fill="#fff"/><rect x="24" y="16.200" width="1.500" height="1.300" fill="#fff"/><rect x="27.500" y="16.200" width="1.500" height="1.300" fill="#fff"/>
<rect x="10.3" y="21" width="3.600" height="3.200" fill="#c8201c"/><rect x="9.5" y="23.2" width="1.800" height="1.600" fill="#222"/><rect x="9.8" y="25.6" width="4.600" height=".9" fill="#8a8a9a"/><rect x="17.3" y="21" width="3.600" height="3.200" fill="#1c9ab8"/><rect x="16.5" y="23.2" width="1.800" height="1.600" fill="#222"/><rect x="16.8" y="25.6" width="4.600" height=".9" fill="#8a8a9a"/><rect x="24.3" y="21" width="3.600" height="3.200" fill="#1c3cb8"/><rect x="23.5" y="23.2" width="1.800" height="1.600" fill="#222"/><rect x="23.8" y="25.6" width="4.600" height=".9" fill="#8a8a9a"/><rect x="10.3" y="28" width="3.600" height="3.200" fill="#b81c9a"/><rect x="9.5" y="30.2" width="1.800" height="1.600" fill="#222"/><rect x="9.8" y="32.6" width="4.600" height=".9" fill="#8a8a9a"/><rect x="17.3" y="28" width="3.600" height="3.200" fill="#9a9a1c"/><rect x="16.5" y="30.2" width="1.800" height="1.600" fill="#222"/><rect x="16.8" y="32.6" width="4.600" height=".9" fill="#8a8a9a"/><rect x="24.3" y="28" width="3.600" height="3.200" fill="#c8201c"/><rect x="23.5" y="30.2" width="1.800" height="1.600" fill="#222"/><rect x="23.8" y="32.6" width="4.600" height=".9" fill="#8a8a9a"/></g></svg>
<span class="t" style='left:618px;top:447.00px;font:normal normal 11px "Liberation Sans",sans-serif;line-height:20px;color:#1212b0;letter-spacing:-0.143px;'>protocol</span>
<span class="t" style='left:618px;top:461.00px;font:normal normal 11px "Liberation Sans",sans-serif;line-height:20px;color:#1212b0;letter-spacing:-0.537px;'>Datei</span>
<span class="t" style='left:618px;top:475.00px;font:normal normal 11px "Liberation Sans",sans-serif;line-height:20px;color:#1212b0;letter-spacing:-0.465px;'>1 KB</span>
<svg style="left:788px;top:336px" width="40" height="49" viewBox="0 0 40 49"><g>
<path d="M.500 .500H29L38.500 10V47.500H.500z" fill="#fff" stroke="#7a7a7a" stroke-width="1"/>
<path d="M38.500 10.500V47.500H1" fill="none" stroke="#4a4a4a" stroke-width="1.200"/>
<path d="M29 .500V10h9.500z" fill="#f0f0f0" stroke="#7a7a7a" stroke-width="1" stroke-linejoin="round"/>
<path d="M29.500 10.500h9l-9-9z" fill="#f2f2f2"/><path d="M30 10.200h8.300" stroke="#9a9a9a" stroke-width="1.400"/>
<rect x="6.500" y="14.500" width="25" height="21.500" fill="#f6f6f2" stroke="#555" stroke-width="1"/>
<path d="M7 36.300h25M31.800 15v21" stroke="#333" stroke-width="1.100" fill="none"/>
<rect x="7" y="15" width="24" height="3.600" fill="#1c2478"/>
<rect x="9" y="16.200" width="1.500" height="1.300" fill="#fff"/><rect x="20.500" y="16.200" width="1.500" height="1.300" fill="#fff"/><rect x="24" y="16.200" width="1.500" height="1.300" fill="#fff"/><rect x="27.500" y="16.200" width="1.500" height="1.300" fill="#fff"/>
<rect x="10.3" y="21" width="3.600" height="3.200" fill="#c8201c"/><rect x="9.5" y="23.2" width="1.800" height="1.600" fill="#222"/><rect x="9.8" y="25.6" width="4.600" height=".9" fill="#8a8a9a"/><rect x="17.3" y="21" width="3.600" height="3.200" fill="#1c9ab8"/><rect x="16.5" y="23.2" width="1.800" height="1.600" fill="#222"/><rect x="16.8" y="25.6" width="4.600" height=".9" fill="#8a8a9a"/><rect x="24.3" y="21" width="3.600" height="3.200" fill="#1c3cb8"/><rect x="23.5" y="23.2" width="1.800" height="1.600" fill="#222"/><rect x="23.8" y="25.6" width="4.600" height=".9" fill="#8a8a9a"/><rect x="10.3" y="28" width="3.600" height="3.200" fill="#b81c9a"/><rect x="9.5" y="30.2" width="1.800" height="1.600" fill="#222"/><rect x="9.8" y="32.6" width="4.600" height=".9" fill="#8a8a9a"/><rect x="17.3" y="28" width="3.600" height="3.200" fill="#9a9a1c"/><rect x="16.5" y="30.2" width="1.800" height="1.600" fill="#222"/><rect x="16.8" y="32.6" width="4.600" height=".9" fill="#8a8a9a"/><rect x="24.3" y="28" width="3.600" height="3.200" fill="#c8201c"/><rect x="23.5" y="30.2" width="1.800" height="1.600" fill="#222"/><rect x="23.8" y="32.6" width="4.600" height=".9" fill="#8a8a9a"/></g></svg>
<span class="t" style='left:835.5px;top:335.00px;font:normal normal 11px "Liberation Sans",sans-serif;line-height:20px;color:#000;letter-spacing:-0.042px;'>hosts.20080923-002035.backup</span>
<span class="t" style='left:835.5px;top:349.00px;font:normal normal 11px "Liberation Sans",sans-serif;line-height:20px;color:#8e8e8e;letter-spacing:-0.423px;'>BACKUP-Datei</span>
<span class="t" style='left:835.5px;top:363.00px;font:normal normal 11px "Liberation Sans",sans-serif;line-height:20px;color:#8e8e8e;letter-spacing:-0.340px;'>1 KB</span>
<svg style="left:788px;top:392px" width="40" height="49" viewBox="0 0 40 49"><g>
<path d="M.500 .500H29L38.500 10V47.500H.500z" fill="#fff" stroke="#7a7a7a" stroke-width="1"/>
<path d="M38.500 10.500V47.500H1" fill="none" stroke="#4a4a4a" stroke-width="1.200"/>
<path d="M29 .500V10h9.500z" fill="#f0f0f0" stroke="#7a7a7a" stroke-width="1" stroke-linejoin="round"/>
<path d="M29.500 10.500h9l-9-9z" fill="#f2f2f2"/><path d="M30 10.200h8.300" stroke="#9a9a9a" stroke-width="1.400"/>
<rect x="6.500" y="14.500" width="25" height="21.500" fill="#f6f6f2" stroke="#555" stroke-width="1"/>
<path d="M7 36.300h25M31.800 15v21" stroke="#333" stroke-width="1.100" fill="none"/>
<rect x="7" y="15" width="24" height="3.600" fill="#1c2478"/>
<rect x="9" y="16.200" width="1.500" height="1.300" fill="#fff"/><rect x="20.500" y="16.200" width="1.500" height="1.300" fill="#fff"/><rect x="24" y="16.200" width="1.500" height="1.300" fill="#fff"/><rect x="27.500" y="16.200" width="1.500" height="1.300" fill="#fff"/>
<rect x="10.3" y="21" width="3.600" height="3.200" fill="#c8201c"/><rect x="9.5" y="23.2" width="1.800" height="1.600" fill="#222"/><rect x="9.8" y="25.6" width="4.600" height=".9" fill="#8a8a9a"/><rect x="17.3" y="21" width="3.600" height="3.200" fill="#1c9ab8"/><rect x="16.5" y="23.2" width="1.800" height="1.600" fill="#222"/><rect x="16.8" y="25.6" width="4.600" height=".9" fill="#8a8a9a"/><rect x="24.3" y="21" width="3.600" height="3.200" fill="#1c3cb8"/><rect x="23.5" y="23.2" width="1.800" height="1.600" fill="#222"/><rect x="23.8" y="25.6" width="4.600" height=".9" fill="#8a8a9a"/><rect x="10.3" y="28" width="3.600" height="3.200" fill="#b81c9a"/><rect x="9.5" y="30.2" width="1.800" height="1.600" fill="#222"/><rect x="9.8" y="32.6" width="4.600" height=".9" fill="#8a8a9a"/><rect x="17.3" y="28" width="3.600" height="3.200" fill="#9a9a1c"/><rect x="16.5" y="30.2" width="1.800" height="1.600" fill="#222"/><rect x="16.8" y="32.6" width="4.600" height=".9" fill="#8a8a9a"/><rect x="24.3" y="28" width="3.600" height="3.200" fill="#c8201c"/><rect x="23.5" y="30.2" width="1.800" height="1.600" fill="#222"/><rect x="23.8" y="32.6" width="4.600" height=".9" fill="#8a8a9a"/></g></svg>
<span class="t" style='left:835.5px;top:391.00px;font:normal normal 11px "Liberation Sans",sans-serif;line-height:20px;color:#1212b0;letter-spacing:0.184px;'>networks</span>
<span class="t" style='left:835.5px;top:405.00px;font:normal normal 11px "Liberation Sans",sans-serif;line-height:20px;color:#1212b0;letter-spacing:-0.438px;'>Datei</span>
<span class="t" style='left:835.5px;top:419.00px;font:normal normal 11px "Liberation Sans",sans-serif;line-height:20px;color:#1212b0;letter-spacing:-0.340px;'>1 KB</span>
<svg style="left:788px;top:448px" width="40" height="49" viewBox="0 0 40 49"><g>
<path d="M.500 .500H29L38.500 10V47.500H.500z" fill="#fff" stroke="#7a7a7a" stroke-width="1"/>
<path d="M38.500 10.500V47.500H1" fill="none" stroke="#4a4a4a" stroke-width="1.200"/>
<path d="M29 .500V10h9.500z" fill="#f0f0f0" stroke="#7a7a7a" stroke-width="1" stroke-linejoin="round"/>
<path d="M29.500 10.500h9l-9-9z" fill="#f2f2f2"/><path d="M30 10.200h8.300" stroke="#9a9a9a" stroke-width="1.400"/>
<rect x="6.500" y="14.500" width="25" height="21.500" fill="#f6f6f2" stroke="#555" stroke-width="1"/>
<path d="M7 36.300h25M31.800 15v21" stroke="#333" stroke-width="1.100" fill="none"/>
<rect x="7" y="15" width="24" height="3.600" fill="#1c2478"/>
<rect x="9" y="16.200" width="1.500" height="1.300" fill="#fff"/><rect x="20.500" y="16.200" width="1.500" height="1.300" fill="#fff"/><rect x="24" y="16.200" width="1.500" height="1.300" fill="#fff"/><rect x="27.500" y="16.200" width="1.500" height="1.300" fill="#fff"/>
<rect x="10.3" y="21" width="3.600" height="3.200" fill="#c8201c"/><rect x="9.5" y="23.2" width="1.800" height="1.600" fill="#222"/><rect x="9.8" y="25.6" width="4.600" height=".9" fill="#8a8a9a"/><rect x="17.3" y="21" width="3.600" height="3.200" fill="#1c9ab8"/><rect x="16.5" y="23.2" width="1.800" height="1.600" fill="#222"/><rect x="16.8" y="25.6" width="4.600" height=".9" fill="#8a8a9a"/><rect x="24.3" y="21" width="3.600" height="3.200" fill="#1c3cb8"/><rect x="23.5" y="23.2" width="1.800" height="1.600" fill="#222"/><rect x="23.8" y="25.6" width="4.600" height=".9" fill="#8a8a9a"/><rect x="10.3" y="28" width="3.600" height="3.200" fill="#b81c9a"/><rect x="9.5" y="30.2" width="1.800" height="1.600" fill="#222"/><rect x="9.8" y="32.6" width="4.600" height=".9" fill="#8a8a9a"/><rect x="17.3" y="28" width="3.600" height="3.200" fill="#9a9a1c"/><rect x="16.5" y="30.2" width="1.800" height="1.600" fill="#222"/><rect x="16.8" y="32.6" width="4.600" height=".9" fill="#8a8a9a"/><rect x="24.3" y="28" width="3.600" height="3.200" fill="#c8201c"/><rect x="23.5" y="30.2" width="1.800" height="1.600" fill="#222"/><rect x="23.8" y="32.6" width="4.600" height=".9" fill="#8a8a9a"/></g></svg>
<span class="t" style='left:835.5px;top:447.00px;font:normal normal 11px "Liberation Sans",sans-serif;line-height:20px;color:#1212b0;letter-spacing:0.145px;'>services</span>
<span class="t" style='left:835.5px;top:461.00px;font:normal normal 11px "Liberation Sans",sans-serif;line-height:20px;color:#1212b0;letter-spacing:-0.438px;'>Datei</span>
<span class="t" style='left:835.5px;top:475.00px;font:normal normal 11px "Liberation Sans",sans-serif;line-height:20px;color:#1212b0;letter-spacing:-0.340px;'>7 KB</span>
<!-- taskbar -->
<div style="left:0;top:780px;width:1164px;height:12px;background:linear-gradient(#000 0,#000 1px,#363636 1px,#262626 4px,#1e1e1e 8px,#1c1c1c 12px)"></div>
<div style="left:-1px;top:782px;width:126px;height:12px;background:#020202;border:1px solid #2c2c2c"></div>
<div style="left:5px;top:790px;width:1px;height:2px;background:#eee"></div>
<div style="left:892px;top:783.500px;width:168px;height:9px;background:linear-gradient(#2a7a9c,#125476);border:1px solid #3d8cb0;border-bottom:0"></div>
<div style="left:915px;top:786.500px;width:130px;height:12px;background:#0f4a6c;border:1px solid #0a3048;border-radius:8px"></div>
<div style="left:941px;top:787px;width:70px;height:8px;background:linear-gradient(#4ea0b8,#2a7a98);border:1px solid #0a3a54;border-radius:3px"></div>
<div style="left:964px;top:784px;width:25px;height:25px;border-radius:50%;background:radial-gradient(circle at 50% 30%,#5cb8ff,#1a7ae0);border:1.500px solid #bfe4ff"></div>
<div style="left:972px;top:790px;width:3px;height:3px;border-radius:50%;background:#fff"></div><div style="left:978px;top:790px;width:3px;height:3px;border-radius:50%;background:#fff"></div>
<div style="left:900px;top:788px;width:12px;height:12px;border-radius:50%;background:radial-gradient(circle at 40% 30%,#fff,#a8b8a0 60%,#c86a6a)"></div>
<svg style="left:1052px;top:785px" width="7" height="7" viewBox="0 0 7 7"><path d="M1 3.300 3.500 1 6 3.300M1 5.500 3.500 7.800 6 5.500" fill="none" stroke="#fff" stroke-width="1.300"/></svg>
<div style="left:1018px;top:790px;width:2px;height:2px;background:#dfefff"></div><div style="left:1023px;top:790px;width:2px;height:2px;background:#dfefff"></div>
</div>
</body>
</html>
